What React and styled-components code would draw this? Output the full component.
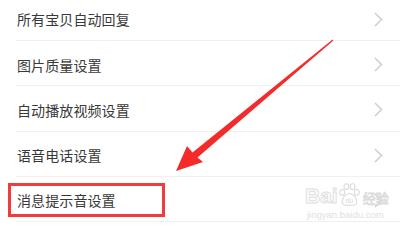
import React from 'react';
import styled, { createGlobalStyle } from 'styled-components';

const GlobalStyle = createGlobalStyle`
  html, body {
    margin: 0;
    padding: 0;
    background: #fff;
  }
  body {
    font-family: "Noto Sans CJK SC", "Noto Sans", sans-serif;
  }
`;

const Screen = styled.div`
  position: relative;
  width: 400px;
  height: 228px;
  overflow: hidden;
  background: #fff;
`;

const List = styled.ul`
  list-style: none;
  margin: -4.25px 0 0 0;
  padding: 0;
`;

const Row = styled.li`
  display: flex;
  align-items: center;
  justify-content: space-between;
  box-sizing: border-box;
  height: 45.25px;
  margin-left: 16px;
  padding: 3px 17px 0 1px;
  border-bottom: 1px solid #f0f0f0;
`;

const Label = styled.span`
  font-size: 14px;
  line-height: 20px;
  color: #383838;
  letter-spacing: 0.1px;
`;

const Chevron = () => (
  <svg width="9" height="15" viewBox="0 0 9 15">
    <polyline points="1,1 7.5,7.5 1,14" fill="none" stroke="#cacaca" strokeWidth="1.4" />
  </svg>
);

const Highlight = styled.div`
  position: absolute;
  left: 8px;
  top: 183px;
  width: 157px;
  height: 34px;
  box-sizing: border-box;
  border: 3px solid #f43b3b;
`;

const ArrowLayer = styled.svg`
  position: absolute;
  left: 0;
  top: 0;
  pointer-events: none;
`;

const Watermark = styled.div`
  position: absolute;
  left: 305px;
  top: 183px;
  display: flex;
  flex-direction: column;
  align-items: flex-start;
  font-family: "Liberation Sans", Arial, sans-serif;
`;

const MarkLine = styled.div`
  display: flex;
  align-items: flex-end;
  gap: 1px;
`;

const MarkBai = styled.span`
  font-size: 21px;
  font-weight: bold;
  line-height: 22px;
  color: #fff;
  -webkit-text-stroke: 1px #dedede;
`;

const MarkCn = styled.span`
  font-family: "Noto Sans CJK SC", sans-serif;
  font-size: 13px;
  line-height: 18px;
  color: #fff;
  -webkit-text-stroke: 0.8px #dadada;
  margin-left: 2px;
`;

const MarkUrl = styled.span`
  font-size: 9.5px;
  line-height: 10px;
  color: #e0e0e0;
  margin-top: 3px;
  margin-left: 2px;
`;

const Paw = () => (
  <svg width="21" height="24" viewBox="0 0 20 23">
    <g fill="#fff" stroke="#dadada" strokeWidth="1">
      <ellipse cx="3" cy="9" rx="2.3" ry="2.8" />
      <ellipse cx="7" cy="3.5" rx="2.3" ry="2.8" />
      <ellipse cx="13" cy="3.5" rx="2.3" ry="2.8" />
      <ellipse cx="17" cy="9" rx="2.3" ry="2.8" />
      <path d="M10 10 C6 10 3 15 3 18 C3 21 6 22 10 21 C14 22 17 21 17 18 C17 15 14 10 10 10 Z" />
    </g>
    <text x="10" y="19.5" textAnchor="middle" fontSize="6.5" fontFamily="Liberation Sans, sans-serif" fill="#d8d8d8">du</text>
  </svg>
);

const items = ['所有宝贝自动回复', '图片质量设置', '自动播放视频设置', '语音电话设置', '消息提示音设置'];

const App = () => {
  return (
    <Screen>
      <GlobalStyle />
      <List>
        {items.map((t) => (
          <Row key={t}>
            <Label>{t}</Label>
            <Chevron />
          </Row>
        ))}
      </List>
      <Watermark>
        <MarkLine>
          <MarkBai>Bai</MarkBai>
          <Paw />
          <MarkCn>经验</MarkCn>
        </MarkLine>
        <MarkUrl>jingyan.baidu.com</MarkUrl>
      </Watermark>
      <Highlight />
      <ArrowLayer width="400" height="228" viewBox="0 0 400 228">
        <polygon
          points="176,171 203,162 197.5,157.5 333.4,40.4 332.6,39.6 192.5,152.5 187,146"
          fill="#f52a2a"
        />
      </ArrowLayer>
    </Screen>
  );
};

export default App;
